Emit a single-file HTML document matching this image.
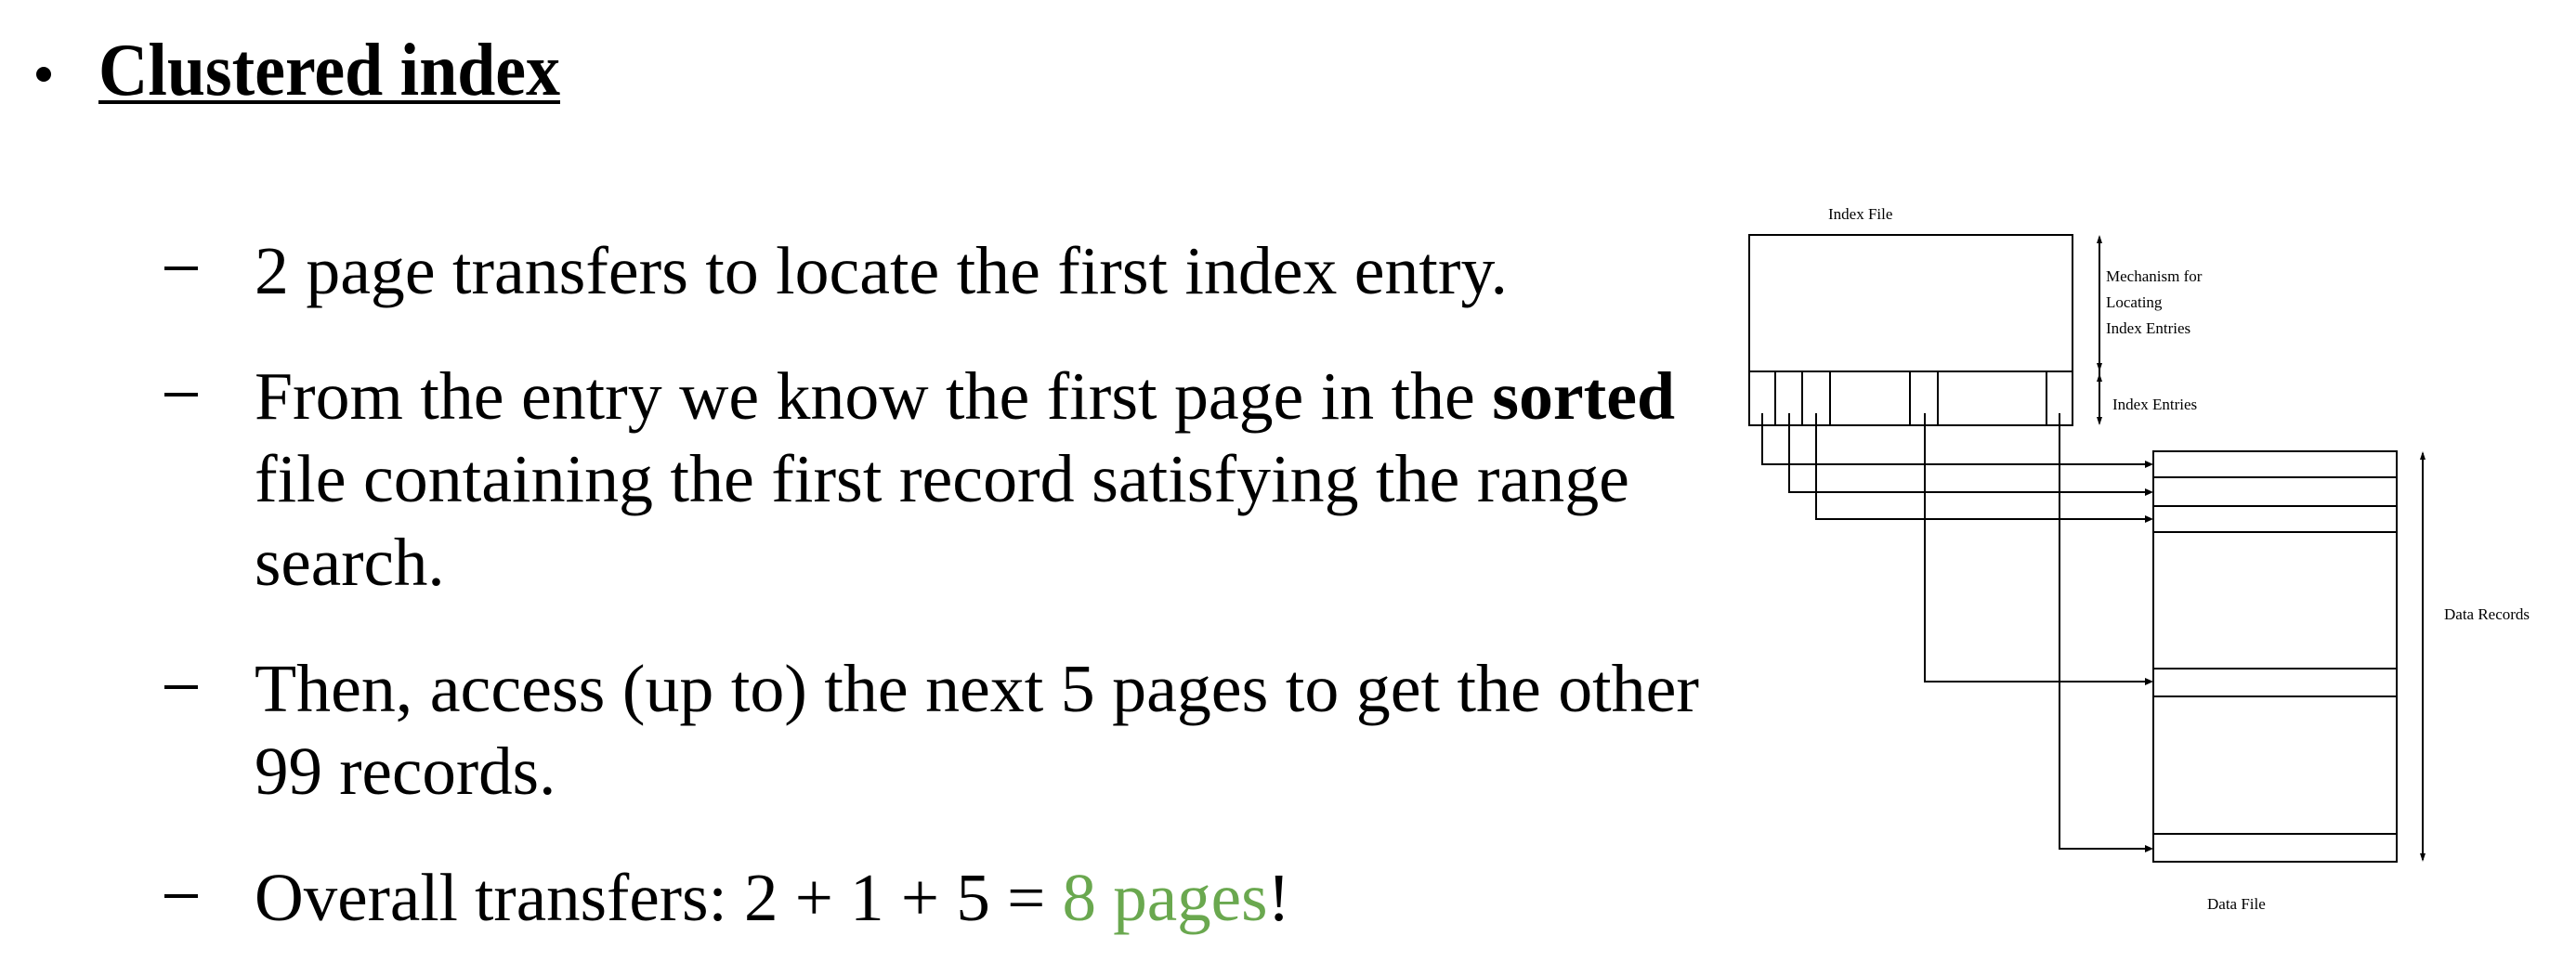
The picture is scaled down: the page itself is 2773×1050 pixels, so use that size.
<!DOCTYPE html>
<html><head><meta charset="utf-8"><style>
html,body{margin:0;padding:0;background:#fff;width:2773px;height:1050px;overflow:hidden}
svg{display:block}
.b{font-family:"Liberation Serif",serif;font-size:73px;fill:#000}
.d{font-family:"Liberation Serif",serif;font-size:17px;fill:#000}
</style></head><body>
<svg width="2773" height="1050" viewBox="0 0 2773 1050" xmlns="http://www.w3.org/2000/svg">
<circle cx="47" cy="80" r="8" fill="#000"/>
<text x="106" y="102" font-family="Liberation Serif, serif" font-weight="bold" font-size="80" fill="#000" textLength="497" lengthAdjust="spacingAndGlyphs">Clustered index</text>
<rect x="106" y="108" width="497" height="4" fill="#000"/>
<g fill="#000">
<rect x="177" y="287" width="36" height="4"/>
<rect x="177" y="423" width="36" height="4"/>
<rect x="177" y="738" width="36" height="4"/>
<rect x="177" y="963" width="36" height="4"/>
</g>
<text class="b" x="274" y="316" textLength="1349" lengthAdjust="spacingAndGlyphs">2 page transfers to locate the first index entry.</text>
<text class="b" x="274" y="451" textLength="1529" lengthAdjust="spacingAndGlyphs">From the entry we know the first page in the <tspan font-weight="bold">sorted</tspan></text>
<text class="b" x="274" y="540" textLength="1480" lengthAdjust="spacingAndGlyphs">file containing the first record satisfying the range</text>
<text class="b" x="274" y="630">search.</text>
<text class="b" x="274" y="766" textLength="1555" lengthAdjust="spacingAndGlyphs">Then, access (up to) the next 5 pages to get the other</text>
<text class="b" x="274" y="855">99 records.</text>
<text class="b" x="274" y="991">Overall transfers: 2 + 1 + 5 = <tspan fill="#6aa84f">8 pages</tspan>!</text>

<g stroke="#000" stroke-width="2" fill="none">
<rect x="1883" y="253" width="348" height="205"/>
<line x1="1883" y1="400" x2="2231" y2="400"/>
<line x1="1911" y1="400" x2="1911" y2="458"/>
<line x1="1940" y1="400" x2="1940" y2="458"/>
<line x1="1970" y1="400" x2="1970" y2="458"/>
<line x1="2056" y1="400" x2="2056" y2="458"/>
<line x1="2086" y1="400" x2="2086" y2="458"/>
<line x1="2203" y1="400" x2="2203" y2="458"/>
<rect x="2318" y="486" width="262" height="442"/>
<line x1="2318" y1="514" x2="2580" y2="514"/>
<line x1="2318" y1="545" x2="2580" y2="545"/>
<line x1="2318" y1="573" x2="2580" y2="573"/>
<line x1="2318" y1="720" x2="2580" y2="720"/>
<line x1="2318" y1="750" x2="2580" y2="750"/>
<line x1="2318" y1="898" x2="2580" y2="898"/>
<polyline points="1897,445 1897,500 2314,500"/>
<polyline points="1926,445 1926,530 2314,530"/>
<polyline points="1955,445 1955,559 2314,559"/>
<polyline points="2072,445 2072,734 2314,734"/>
<polyline points="2217,445 2217,914 2314,914"/>
<line x1="2260" y1="255" x2="2260" y2="456"/>
<line x1="2608" y1="488" x2="2608" y2="926"/>
</g>
<g fill="#000">
<path d="M2318,500 l-9,-4 v8z"/><path d="M2318,530 l-9,-4 v8z"/><path d="M2318,559 l-9,-4 v8z"/><path d="M2318,734 l-9,-4 v8z"/><path d="M2318,914 l-9,-4 v8z"/>
<path d="M2260,253 l-3,9 h6z"/><path d="M2260,400 l-3,-9 h6z"/><path d="M2260,402 l-3,9 h6z"/><path d="M2260,458 l-3,-9 h6z"/>
<path d="M2608,486 l-3,9 h6z"/><path d="M2608,928 l-3,-9 h6z"/>
</g>
<text class="d" x="1968" y="236">Index File</text>
<text class="d" x="2267" y="303">Mechanism for</text>
<text class="d" x="2267" y="331">Locating</text>
<text class="d" x="2267" y="359">Index Entries</text>
<text class="d" x="2274" y="441">Index Entries</text>
<text class="d" x="2631" y="667">Data Records</text>
<text class="d" x="2376" y="979">Data File</text>
</svg>
</body></html>
